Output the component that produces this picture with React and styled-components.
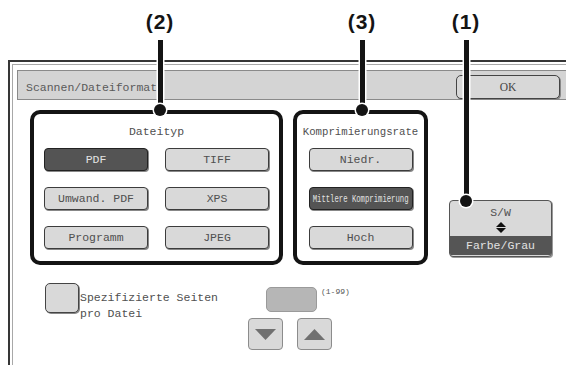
import React from 'react';
import styled, { createGlobalStyle } from 'styled-components';

const Global = createGlobalStyle`
  html, body { margin: 0; padding: 0; background: #fff; }
  body { width: 566px; height: 365px; overflow: hidden; font-family: "Liberation Mono", "DejaVu Sans Mono", monospace; }
`;

const Page = styled.div`
  position: relative;
  width: 566px;
  height: 365px;
  overflow: hidden;
  padding-top: 60px;
  box-sizing: border-box;
`;

const Window = styled.div`
  margin-left: 8px;
  width: 620px;
  height: 340px;
  border-top: 2px solid #363636;
  border-left: 2px solid #363636;
  padding: 2px 0 0 2px;
  box-sizing: border-box;
`;

const WindowInner = styled.div`
  height: 100%;
  border-top: 1px solid #a8a8a8;
  border-left: 1px solid #a8a8a8;
  padding: 5px 0 0 4px;
  box-sizing: border-box;
`;

const TitleBar = styled.div`
  width: 549px;
  height: 30px;
  box-sizing: border-box;
  display: flex;
  align-items: center;
  justify-content: space-between;
  border: 1px solid #8a8a8a;
  border-right: none;
  background: #d4d4d4;
  padding: 4px 6px 0 8px;
`;

const Title = styled.span`
  font-size: 11.5px;
  color: #5a5a5a;
`;

const OkButton = styled.div`
  width: 104px;
  height: 24px;
  box-sizing: border-box;
  border: 1px solid #444;
  border-radius: 5px;
  background: #d8d8d8;
  box-shadow: 1px 1px 0 #888;
  display: flex;
  align-items: center;
  justify-content: center;
  font-family: "Liberation Serif", "Times New Roman", serif;
  font-size: 11.5px;
  color: #444;
`;

const Content = styled.div`
  padding: 10px 0 0 13px;
`;

const GroupRow = styled.div`
  display: flex;
  align-items: flex-end;
`;

const GroupBox = styled.div`
  width: ${p => p.$w}px;
  margin-right: ${p => p.$gap}px;
  box-sizing: border-box;
  border: 4px solid #141414;
  border-radius: 10px;
  padding: 11px 0 12px;
  display: flex;
  flex-direction: column;
  align-items: center;
`;

const GroupLabel = styled.div`
  height: 14px;
  line-height: 14px;
  font-size: ${p => p.$size || 11.5}px;
  color: #505050;
  margin-bottom: 9px;
  white-space: nowrap;
`;

const ButtonGrid = styled.div`
  display: grid;
  grid-template-columns: repeat(${p => p.$cols}, 104px);
  column-gap: 17px;
  row-gap: 16px;
`;

const Btn = styled.div`
  height: 23px;
  box-sizing: border-box;
  border: 1px solid ${p => (p.$active ? '#222' : '#3c3c3c')};
  border-radius: 4px;
  background: ${p => (p.$active ? '#545454' : '#d9d9d9')};
  color: ${p => (p.$active ? '#e2e2e2' : '#505050')};
  box-shadow: 1px 1px 0 #888;
  display: flex;
  align-items: center;
  justify-content: center;
  font-size: 11.5px;
  white-space: nowrap;
`;

const Squeezed = styled.span`
  display: inline-block;
  font-size: 11px;
  transform: scaleX(0.66);
  white-space: nowrap;
`;

const SWButton = styled.div`
  width: 103px;
  height: 57px;
  margin-bottom: 8px;
  box-sizing: border-box;
  border: 1px solid #555;
  border-radius: 4px;
  background: #d9d9d9;
  box-shadow: 1px 1px 0 #999;
  display: flex;
  flex-direction: column;
  overflow: hidden;
`;

const SWTop = styled.div`
  flex: 1;
  display: flex;
  flex-direction: column;
  align-items: center;
  padding-top: 5px;
  font-size: 11.5px;
  line-height: 14px;
  color: #505050;
`;

const SWIcon = styled.svg`
  margin-top: 2px;
  display: block;
`;

const SWBand = styled.div`
  height: 19px;
  margin-bottom: 1px;
  background: #555;
  color: #e2e2e2;
  display: flex;
  align-items: center;
  justify-content: center;
  font-size: 11.5px;
`;

const BottomRow = styled.div`
  margin-top: 18px;
  padding-left: 15px;
  display: flex;
  align-items: flex-start;
`;

const CheckGroup = styled.div`
  flex: 0 0 203px;
  display: flex;
  gap: 1px;
`;

const CheckBox = styled.div`
  width: 34px;
  height: 30px;
  box-sizing: border-box;
  border: 1px solid #444;
  border-radius: 5px;
  background: #d9d9d9;
  box-shadow: 1px 1px 0 #888;
`;

const CheckLabel = styled.div`
  margin-top: 7px;
  font-size: 11.5px;
  line-height: 16px;
  color: #505050;
`;

const NumberGroup = styled.div`
  margin-top: 4px;
  display: flex;
  flex-direction: column;
  align-items: center;
  gap: 6px;
`;

const NumberField = styled.div`
  position: relative;
  width: 51px;
  height: 25px;
  box-sizing: border-box;
  border: 1px solid #9a9a9a;
  border-radius: 5px;
  background: #b6b6b6;
  margin-left: 3px;
`;

const RangeNote = styled.span`
  position: absolute;
  left: calc(100% + 5px);
  top: -1px;
  font-size: 8px;
  color: #555;
  white-space: nowrap;
`;

const ArrowRow = styled.div`
  display: flex;
  gap: 14px;
`;

const ArrowButton = styled.div`
  width: 35px;
  height: 32px;
  box-sizing: border-box;
  border: 1px solid #8c8c8c;
  border-radius: 4px;
  background: #d9d9d9;
  display: flex;
  align-items: center;
  justify-content: center;
`;

const Callout = styled.div`
  position: absolute;
  left: ${p => p.$x - 25}px;
  top: 11px;
  width: 50px;
  display: flex;
  flex-direction: column;
  align-items: center;
  pointer-events: none;
`;

const CalloutLabel = styled.div`
  font-family: "Liberation Sans", Arial, sans-serif;
  font-weight: bold;
  font-size: 21px;
  line-height: 22px;
  letter-spacing: 1px;
  color: #141414;
`;

const CalloutLine = styled.div`
  margin-top: 7px;
  width: 5px;
  height: ${p => p.$h}px;
  background: #141414;
  box-shadow: 0 0 0 1.5px #fff;
`;

const CalloutDot = styled.div`
  width: 12px;
  height: 12px;
  margin-top: -6px;
  border-radius: 50%;
  background: #141414;
  box-shadow: 0 0 0 1.5px #fff;
`;

const callouts = [
  { label: '(2)', x: 160, y: 110 },
  { label: '(3)', x: 362, y: 110 },
  { label: '(1)', x: 466, y: 201 },
];

const Tri = ({ up }) => (
  <svg width="21" height="11" viewBox="0 0 21 11">
    <polygon points={up ? '0,11 10.5,0 21,11' : '0,0 21,0 10.5,11'} fill="#707070" />
  </svg>
);

export default function App() {
  return (
    <>
      <Global />
      <Page>
        <Window>
          <WindowInner>
            <TitleBar>
              <Title>Scannen/Dateiformat</Title>
              <OkButton>OK</OkButton>
            </TitleBar>
            <Content>
              <GroupRow>
                <GroupBox $w={253} $gap={10}>
                  <GroupLabel>Dateityp</GroupLabel>
                  <ButtonGrid $cols={2}>
                    <Btn $active>PDF</Btn>
                    <Btn>TIFF</Btn>
                    <Btn>Umwand. PDF</Btn>
                    <Btn>XPS</Btn>
                    <Btn>Programm</Btn>
                    <Btn>JPEG</Btn>
                  </ButtonGrid>
                </GroupBox>
                <GroupBox $w={135} $gap={21}>
                  <GroupLabel $size={10.7}>Komprimierungsrate</GroupLabel>
                  <ButtonGrid $cols={1}>
                    <Btn>Niedr.</Btn>
                    <Btn $active>
                      <Squeezed>Mittlere Komprimierung</Squeezed>
                    </Btn>
                    <Btn>Hoch</Btn>
                  </ButtonGrid>
                </GroupBox>
                <SWButton>
                  <SWTop>
                    S/W
                    <SWIcon width="10" height="11" viewBox="0 0 10 11">
                      <polygon points="0,5 5,0 10,5" fill="#111" />
                      <polygon points="0,6 10,6 5,11" fill="#111" />
                    </SWIcon>
                  </SWTop>
                  <SWBand>Farbe/Grau</SWBand>
                </SWButton>
              </GroupRow>
              <BottomRow>
                <CheckGroup>
                  <CheckBox />
                  <CheckLabel>
                    Spezifizierte Seiten
                    <br />
                    pro Datei
                  </CheckLabel>
                </CheckGroup>
                <NumberGroup>
                  <NumberField>
                    <RangeNote>(1-99)</RangeNote>
                  </NumberField>
                  <ArrowRow>
                    <ArrowButton><Tri /></ArrowButton>
                    <ArrowButton><Tri up /></ArrowButton>
                  </ArrowRow>
                </NumberGroup>
              </BottomRow>
            </Content>
          </WindowInner>
        </Window>
        {callouts.map(c => (
          <Callout key={c.label} $x={c.x}>
            <CalloutLabel>{c.label}</CalloutLabel>
            <CalloutLine $h={c.y - 40} />
            <CalloutDot />
          </Callout>
        ))}
      </Page>
    </>
  );
}
